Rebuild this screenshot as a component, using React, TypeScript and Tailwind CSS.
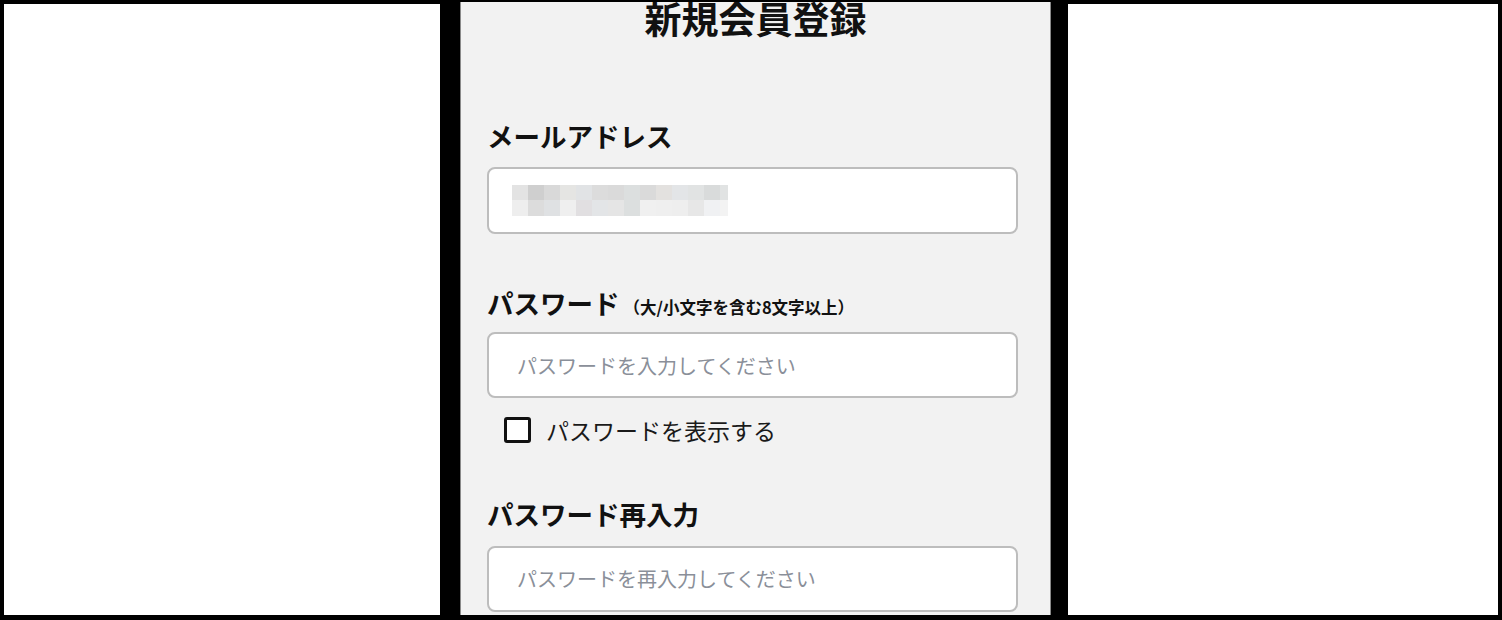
const mosaic = [
  ['#e3e3e3', '#cfcfcf', '#d9d9d9', '#e5e5e3', '#e1e3e5', '#dcdcdc', '#dadada', '#dcdfdf', '#dadada', '#e3e1df', '#e3e5e7', '#e1e3e3', '#d9dbdb', '#e1e3e3'],
  ['#eeeeee', '#dcdcdc', '#dfe1e3', '#efefef', '#e1dfe1', '#e3e5e7', '#e5e5e5', '#dcdfdf', '#f0f0f0', '#efefef', '#eeeeee', '#e7e7e7', '#f0f1f3', '#f3f3f3'],
];

const App = () => {
  return (
    <div
      className="flex w-[1502px] h-[620px] bg-black overflow-hidden"
      style={{ fontFamily: '"Noto Sans CJK JP", "Noto Sans", sans-serif' }}
    >
      {/* left white area */}
      <div className="mt-[4px] ml-[4px] w-[436px] h-[611px] bg-white" />

      {/* form panel */}
      <div className="ml-[20px] mt-[2px] w-[591px] h-[613px] bg-[#f2f2f2] border-x border-[#8a8a8a] overflow-hidden">
        <h1 className="-mt-[2px] text-center text-[37px] leading-none font-bold text-[#111]">新規会員登録</h1>

        <div className="pl-[26px]">
          {/* email */}
          <div className="mt-[86px] text-[26.5px] leading-none font-bold text-[#111]">メールアドレス</div>
          <div className="mt-[17px] w-[531px] h-[67px] bg-white border-2 border-[#bdbdbd] rounded-[8px] flex items-center pl-[23px]">
            <div className="flex flex-col">
              {mosaic.map((row, r) => (
                <div key={r} className="flex">
                  {row.map((c, i) => (
                    <div
                      key={i}
                      className={i === row.length - 1 ? 'w-[8px] h-[15.5px]' : 'w-[16px] h-[15.5px]'}
                      style={{ backgroundColor: c }}
                    />
                  ))}
                </div>
              ))}
            </div>
          </div>

          {/* password */}
          <div className="mt-[56px] flex items-baseline text-[#111] font-bold">
            <span className="text-[26.5px] leading-none">パスワード</span>
            <span className="text-[16.5px] leading-none ml-[4px]">（大/小文字を含む8文字以上）</span>
          </div>
          <input
            type="password"
            readOnly
            placeholder="パスワードを入力してください"
            className="block mt-[16px] w-[531px] h-[66px] bg-white border-2 border-[#bdbdbd] rounded-[8px] pl-[28px] text-[20px] outline-none placeholder:text-[#8a8f99]"
          />
          <div className="mt-[19px] ml-[17px] flex items-center">
            <div className="w-[27px] h-[26px] bg-white border-[3px] border-[#111] rounded-[3px]" />
            <span className="ml-[15px] text-[23px] leading-none text-[#1a1a1a]">パスワードを表示する</span>
          </div>

          {/* password confirm */}
          <div className="mt-[58px] text-[26.5px] leading-none font-bold text-[#111]">パスワード再入力</div>
          <input
            type="password"
            readOnly
            placeholder="パスワードを再入力してください"
            className="block mt-[18px] w-[531px] h-[66px] bg-white border-2 border-[#bdbdbd] rounded-[8px] pl-[28px] text-[20px] outline-none placeholder:text-[#8a8f99]"
          />
        </div>
      </div>

      {/* right white area */}
      <div className="ml-[17px] mt-[4px] w-[430px] h-[611px] bg-white" />
    </div>
  );
};

export default App;
